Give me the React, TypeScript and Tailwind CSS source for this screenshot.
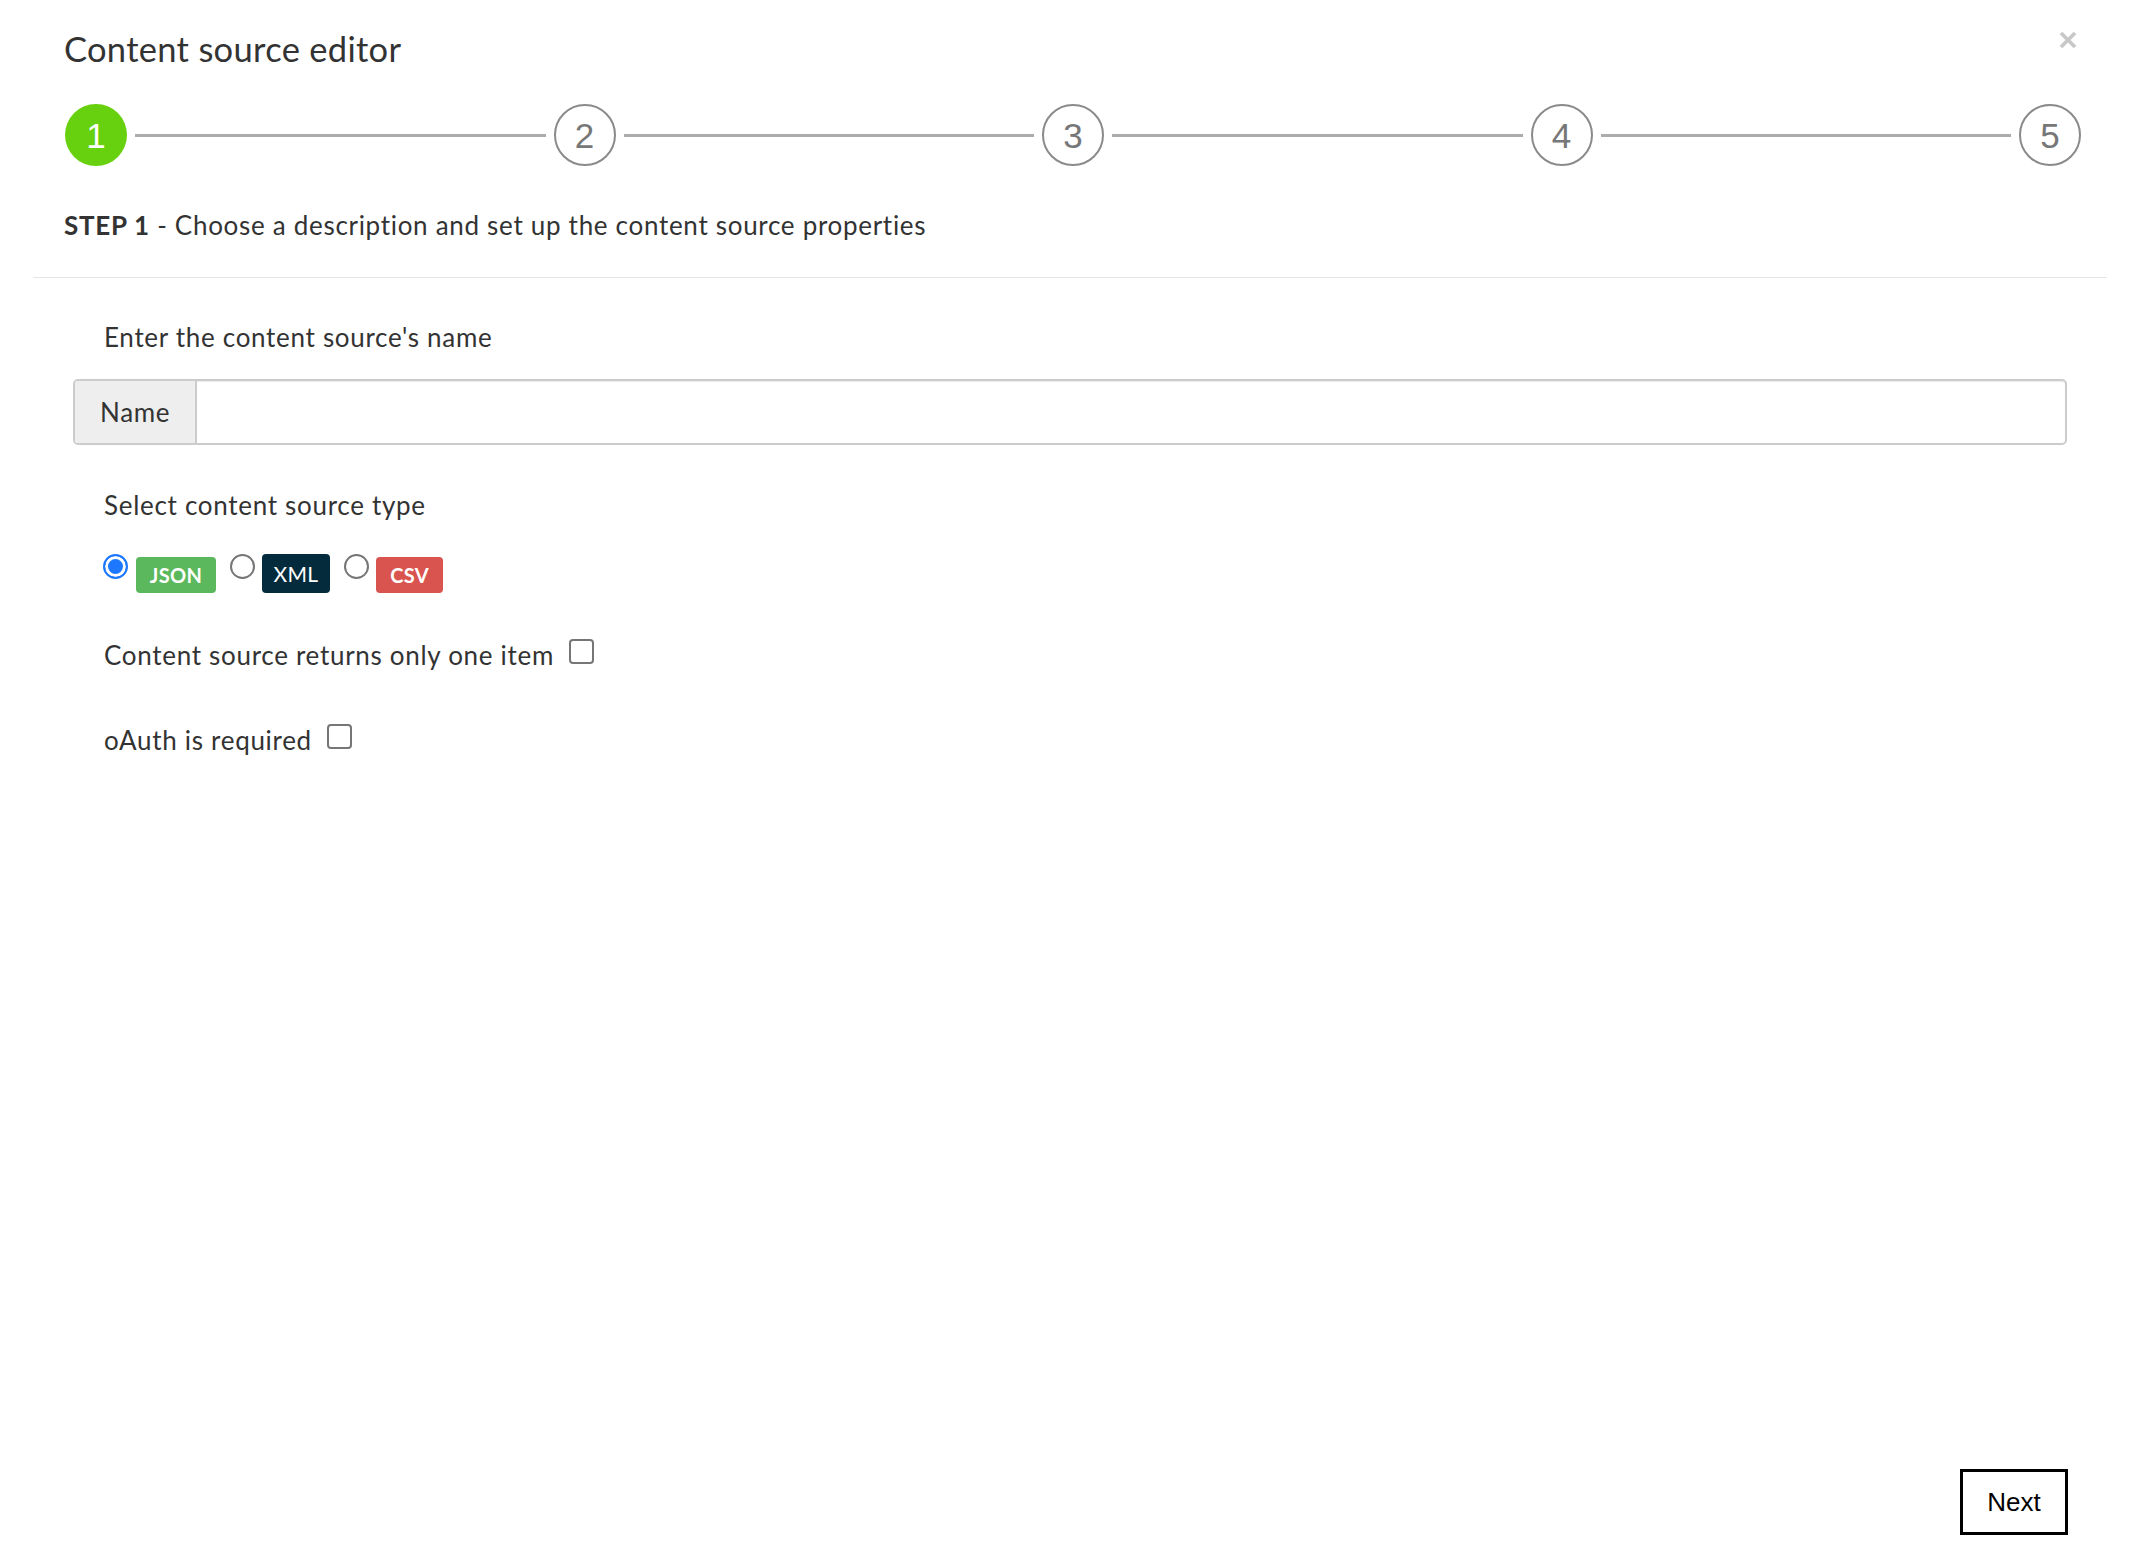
import { useState } from "react";

type StepProps = {
  n: number;
  active?: boolean;
};

const Step = ({ n, active }: StepProps) => (
  <div
    className={`flex h-[62px] w-[62px] shrink-0 items-center justify-center rounded-full font-['Liberation_Sans',Arial,sans-serif] text-[35px] leading-none ${
      active ? "bg-[#67d10f] text-white" : "border-2 border-[#8a8a8a] text-[#777]"
    }`}
  >
    {n}
  </div>
);

const Line = () => <div className="mx-[8px] h-[3px] flex-1 bg-[#acacac]" />;

const App = () => {
  const [type, setType] = useState<"json" | "xml" | "csv">("json");
  const [single, setSingle] = useState(false);
  const [oauth, setOauth] = useState(false);

  const radio =
    "m-0 h-[25px] w-[25px] shrink-0 cursor-pointer appearance-none rounded-full border-2 border-[#767676] bg-white checked:border-[#1e78ff] checked:bg-[#1e78ff] checked:shadow-[inset_0_0_0_3px_white]";
  const checkbox =
    "m-0 ml-[15px] mt-[2px] h-[25px] w-[25px] shrink-0 cursor-pointer appearance-none rounded-[4px] border-2 border-[#767676] bg-white checked:border-[#1e78ff] checked:bg-[#1e78ff]";

  return (
    <div className="flex min-h-screen flex-col bg-white font-['Lato',sans-serif] text-[#333]">
      {/* modal header */}
      <header className="pl-[64px] pr-[59px] pt-[29px]">
        <div className="flex items-start justify-between">
          <h4 className="text-[34.5px] font-normal leading-[40px] tracking-[0.3px]">Content source editor</h4>
          <button type="button" className="mr-[4px] mt-[3px]" aria-label="close">
            <svg width="18" height="16" viewBox="0 0 18 16">
              <path d="M2 1 L16 15 M16 1 L2 15" stroke="#c8c8c8" strokeWidth="3.6" />
            </svg>
          </button>
        </div>

        <div className="ml-[1px] mt-[35px] flex items-center">
          <Step n={1} active />
          <Line />
          <Step n={2} />
          <Line />
          <Step n={3} />
          <Line />
          <Step n={4} />
          <Line />
          <Step n={5} />
        </div>

        <p className="mt-[41px] text-[26px] leading-[36px] tracking-[0.7px]">
          <span className="font-bold">STEP 1</span> - Choose a description and set up the content source properties
        </p>
      </header>

      <div className="mx-[33px] mt-[34px] border-t border-[#e5e5e5]" />

      {/* form */}
      <main className="px-[73px]">
        <p className="mt-[41px] pl-[31px] text-[26px] leading-[36px] tracking-[0.7px]">Enter the content source's name</p>

        <div className="mt-[24px] flex h-[66px] overflow-hidden rounded-[5px] border-2 border-[#ccc] shadow-[inset_0_1px_1px_rgba(0,0,0,0.075)]">
          <div className="flex w-[122px] shrink-0 items-center border-r-2 border-[#ccc] bg-[#eee] pl-[25px] text-[26px] leading-[36px] tracking-[0.7px]">
            Name
          </div>
          <input type="text" className="flex-1 bg-transparent px-[16px] text-[26px] outline-none" />
        </div>

        <p className="mt-[42px] pl-[31px] text-[26px] leading-[36px] tracking-[0.7px]">Select content source type</p>

        <div className="mt-[31px] flex items-start pl-[30px]">
          <input type="radio" name="cstype" className={radio} checked={type === "json"} onChange={() => setType("json")} />
          <span className="ml-[8px] mt-[3px] flex h-[36px] w-[80px] items-center justify-center rounded-[4px] bg-[#5cb85c] text-[20px] font-bold tracking-[0.3px] text-white">
            JSON
          </span>
          <input type="radio" name="cstype" className={`ml-[14px] ${radio}`} checked={type === "xml"} onChange={() => setType("xml")} />
          <span className="ml-[7px] flex h-[39px] w-[68px] items-center justify-center rounded-[4px] bg-[#032b3b] text-[21px] tracking-[0.3px] text-white">
            XML
          </span>
          <input type="radio" name="cstype" className={`ml-[14px] ${radio}`} checked={type === "csv"} onChange={() => setType("csv")} />
          <span className="ml-[7px] mt-[3px] flex h-[36px] w-[67px] items-center justify-center rounded-[4px] bg-[#d9534f] text-[20px] font-bold tracking-[0.3px] text-white">
            CSV
          </span>
        </div>

        <label className="mt-[44px] flex items-start pl-[31px] text-[26px] leading-[36px] tracking-[0.7px]">
          Content source returns only one item
          <input type="checkbox" className={checkbox} checked={single} onChange={() => setSingle(!single)} />
        </label>

        <label className="mt-[49px] flex items-start pl-[31px] text-[26px] leading-[36px] tracking-[0.7px]">
          oAuth is required
          <input type="checkbox" className={checkbox} checked={oauth} onChange={() => setOauth(!oauth)} />
        </label>
      </main>

      {/* footer */}
      <footer className="mt-auto flex justify-end pb-[33px] pr-[72px]">
        <button
          type="button"
          className="h-[66px] w-[108px] border-[3px] border-black bg-white font-['Liberation_Sans',Arial,sans-serif] text-[26px] text-black"
        >
          Next
        </button>
      </footer>
    </div>
  );
};

export default App;
